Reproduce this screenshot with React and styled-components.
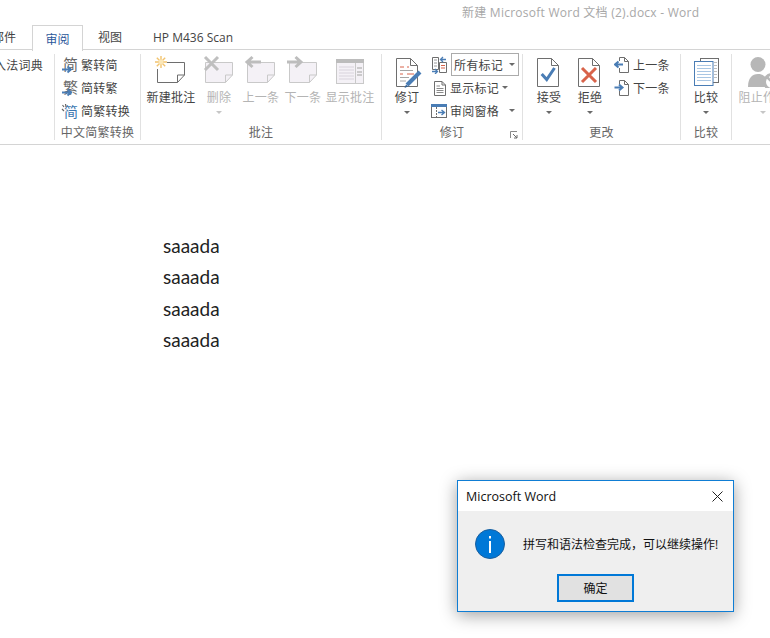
import React from "react";
import styled, { createGlobalStyle } from "styled-components";

const CJK = `"Open Sans", "Noto Sans CJK SC", sans-serif`;

const GlobalStyle = createGlobalStyle`
  html, body {
    margin: 0;
    padding: 0;
    background: #fff;
    overflow: hidden;
  }
`;

const Page = styled.div`
  position: relative;
  width: 770px;
  height: 638px;
  overflow: hidden;
  background: #fff;
  font-family: ${CJK};
  font-size: 12px;
  color: #444;
`;

const TitleBar = styled.div`
  height: 24px;
  display: flex;
  align-items: center;
  padding-left: 462px;
  color: #a8a8a8;
  font-size: 12px;
  letter-spacing: 0.25px;
  white-space: nowrap;
`;

const TabRow = styled.div`
  height: 26px;
  box-sizing: border-box;
  display: flex;
  margin-left: -24px;
  border-bottom: 1px solid #d4d4d4;
`;

const Tab = styled.div`
  box-sizing: border-box;
  height: ${(p) => (p.$active ? "26px" : "25px")};
  margin-top: ${(p) => (p.$active ? "1px" : "0")};
  width: ${(p) => p.$width}px;
  display: flex;
  align-items: center;
  justify-content: center;
  white-space: nowrap;
  color: ${(p) => (p.$active ? "#2b579a" : "#444")};
  background: #fff;
  border: 1px solid ${(p) => (p.$active ? "#d4d4d4" : "transparent")};
  border-bottom: none;
`;

const Ribbon = styled.div`
  height: 95px;
  box-sizing: border-box;
  display: flex;
  align-items: flex-start;
  padding-top: 4px;
  border-bottom: 1px solid #d4d4d4;
`;

const Group = styled.div`
  position: relative;
  flex: none;
  box-sizing: border-box;
  width: ${(p) => p.$width}px;
  height: 86px;
  display: flex;
  flex-direction: column;
  border-right: ${(p) => (p.$last ? "none" : "1px solid #e1e1e1")};
`;

const GroupBody = styled.div`
  height: 73px;
  display: flex;
  align-items: flex-start;
  padding-left: ${(p) => p.$pad || 0}px;
`;

const GroupLabel = styled.div`
  height: 14px;
  line-height: 14px;
  text-align: center;
  color: #666;
  white-space: nowrap;
  letter-spacing: 0.25px;
`;

const Launcher = styled.svg`
  position: absolute;
  right: 4px;
  bottom: 1px;
`;

const BigButton = styled.div`
  flex: none;
  width: ${(p) => p.$width}px;
  display: flex;
  flex-direction: column;
  align-items: center;
  color: ${(p) => (p.$off ? "#b4b4b4" : "#444")};
`;

const IconSlot = styled.div`
  height: 34px;
  display: flex;
  justify-content: center;
`;

const BigLabel = styled.div`
  height: 20px;
  line-height: 20px;
  white-space: nowrap;
  letter-spacing: 0.25px;
`;

const Caret = styled.i`
  display: block;
  width: 0;
  height: 0;
  margin-top: ${(p) => p.$top || 0}px;
  margin-left: ${(p) => p.$left || 0}px;
  border-left: 3px solid transparent;
  border-right: 3px solid transparent;
  border-top: 3px solid ${(p) => (p.$off ? "#c6c6c6" : "#6a6a6a")};
`;

const Stack = styled.div`
  display: flex;
  flex-direction: column;
  margin-top: -1px;
  padding-left: ${(p) => p.$pad || 0}px;
`;

const Row = styled.div`
  height: 23px;
  display: flex;
  align-items: center;
  white-space: nowrap;
  letter-spacing: 0.25px;
`;

const RowText = styled.span`
  margin-left: ${(p) => p.$left || 0}px;
`;

const ComboBox = styled.div`
  box-sizing: border-box;
  width: 68px;
  height: 23px;
  margin-left: 3px;
  padding-left: 2px;
  display: flex;
  align-items: center;
  border: 1px solid #ababab;
`;

const ClippedText = styled.div`
  height: 23px;
  margin-top: -1px;
  padding-right: 11px;
  display: flex;
  align-items: center;
  justify-content: flex-end;
  white-space: nowrap;
  overflow: hidden;
  letter-spacing: 0.25px;
  width: 100%;
  box-sizing: border-box;
`;

const Doc = styled.div`
  padding: 85px 0 0 163px;
  font-family: Lato, "Liberation Sans", sans-serif;
  font-size: 19px;
  color: #222;
`;

const DocLine = styled.div`
  height: 31.3px;
  line-height: 31.3px;
`;

const Dialog = styled.div`
  position: absolute;
  left: 457px;
  top: 480px;
  width: 277px;
  height: 132px;
  box-sizing: border-box;
  display: flex;
  flex-direction: column;
  background: #efefef;
  border: 1px solid #0f7dd4;
  box-shadow: 0 3px 16px rgba(0, 0, 0, 0.38);
`;

const DialogTitle = styled.div`
  height: 30px;
  display: flex;
  align-items: center;
  justify-content: space-between;
  padding: 0 10px 0 8px;
  background: #fff;
  color: #111;
  font-size: 12.5px;
`;

const DialogBody = styled.div`
  display: flex;
  align-items: center;
  gap: 18px;
  padding: 18px 0 0 17px;
  color: #111;
`;

const DialogFooter = styled.div`
  display: flex;
  justify-content: center;
  padding-top: 15px;
`;

const OkButton = styled.div`
  box-sizing: border-box;
  width: 77px;
  height: 28px;
  display: flex;
  align-items: center;
  justify-content: center;
  background: #e1e1e1;
  border: 2px solid #0078d7;
  color: #111;
`;

const line = "#6e6e6e";
const blue = "#4a7db5";
const red = "#d8634a";
const offLine = "#c9c9c9";
const offFill = "#f4f1f6";

function Big({ x = 36, children }) {
  return (
    <svg width={x} height="34" viewBox={`0 0 ${x} 34`} fill="none">
      {children}
    </svg>
  );
}

function Note({ off, open }) {
  return (
    <>
      <path
        d={open ? "M14 8.5H31.5V21L24.5 28.5H4.5V15" : "M4.5 8.5H31.5V21L24.5 28.5H4.5Z"}
        stroke={off ? offLine : line}
        fill={off ? offFill : "#fff"}
      />
      <path d="M31.5 21H24.5V28.5" stroke={off ? offLine : line} />
    </>
  );
}

function NewNoteIcon() {
  return (
    <Big>
      <Note open />
      <g stroke="#f2c46f" strokeWidth="1.4">
        <path d="M8 2V14M2 8H14M3.8 3.8L12.2 12.2M12.2 3.8L3.8 12.2" />
      </g>
      <circle cx="8" cy="8" r="2.4" fill="#fbe7b8" />
    </Big>
  );
}

function DeleteIcon() {
  return (
    <Big>
      <Note off />
      <path d="M4 3L17 16M17 3L4 16" stroke="#bfbfbf" strokeWidth="3" />
    </Big>
  );
}

function PrevNoteIcon() {
  return (
    <Big>
      <Note off />
      <path d="M18 8H5M9.5 3L4 8L9.5 13" stroke="#bdbdbd" strokeWidth="3" />
    </Big>
  );
}

function NextNoteIcon() {
  return (
    <Big>
      <Note off />
      <path d="M2 8H15M10.5 3L16 8L10.5 13" stroke="#bdbdbd" strokeWidth="3" />
    </Big>
  );
}

function ShowNotesIcon() {
  return (
    <Big>
      <rect x="4.5" y="5.5" width="27" height="24" fill={offFill} stroke={offLine} />
      <rect x="4" y="5" width="28" height="4" fill="#bcbcbc" />
      <path d="M7 13H22M7 16H22M7 19H22M7 22H22M7 25H22" stroke="#d8d3dc" />
      <path d="M23.5 9V29" stroke={offLine} />
      <path d="M25 14H30M25 18H30M25 21H30" stroke="#bdbdbd" strokeWidth="1.4" />
    </Big>
  );
}

function PageShape() {
  return (
    <>
      <path d="M6.5 4.5H20.5L27.5 11.5V32.5H6.5Z" fill="#fff" stroke={line} />
      <path d="M20.5 4.5V11.5H27.5" stroke={line} />
    </>
  );
}

function TrackIcon() {
  return (
    <Big>
      <path d="M7.5 4.5H21.5L28.5 11.5V32.5H7.5Z" fill="#fff" stroke={line} />
      <path d="M21.5 4.5V11.5H28.5" stroke={line} />
      <path d="M11 13H15M18 13H20M11 20H14M18 20H25" stroke={red} />
      <path d="M11 16.500H24M11 23.500H20M11 27H17" stroke="#a6a6a6" />
      <path d="M18 31L31 18" stroke={blue} strokeWidth="4" />
      <path d="M15.500 34L17 30.500L19 32.500Z" fill="#2f5f94" />
    </Big>
  );
}

function AcceptIcon() {
  return (
    <Big>
      <PageShape />
      <path d="M10.700 20L15.700 25.500L23.500 14" stroke={blue} strokeWidth="3" />
    </Big>
  );
}

function RejectIcon() {
  return (
    <Big>
      <PageShape />
      <path d="M10 14L24 28M24 14L10 28" stroke={red} strokeWidth="3" />
    </Big>
  );
}

function CompareIcon() {
  return (
    <Big>
      <rect x="12.500" y="4.500" width="18" height="24" fill="#fff" stroke={line} />
      <path d="M26 8.500H29M26 11.500H29M26 14.500H29M26 17.500H29M26 20.500H29M26 23.500H29" stroke="#bdbdbd" />
      <rect x="6.500" y="7.500" width="18.500" height="24" fill="#fff" stroke={blue} />
      <path d="M9 11.500H23M9 14.500H23M9 17.500H23M9 20.500H23M9 23.500H23M9 26.500H23" stroke="#a9c6e3" />
    </Big>
  );
}

function BlockIcon() {
  return (
    <Big>
      <circle cx="13" cy="10.500" r="7.500" fill="#b7b7b7" />
      <path d="M3 33C3 24 7 20 13 20C19 20 23 24 23 33Z" fill="#b7b7b7" />
      <circle cx="27" cy="28" r="7.500" fill="#fff" stroke="#b7b7b7" strokeWidth="3" />
      <path d="M22 23L32 33" stroke="#b7b7b7" strokeWidth="2.500" />
    </Big>
  );
}

function Small({ children, width = 17 }) {
  return (
    <svg width={width} height="18" viewBox={`0 0 ${width} 18`} fill="none">
      {children}
    </svg>
  );
}

function ConvertIcon({ glyph }) {
  return (
    <Small>
      <text x="2" y="14" fontSize="15" fill="#666" fontFamily="Noto Sans CJK SC">
        {glyph}
      </text>
      <path d="M1 13.500H9M6.500 10.500L10 13.500L6.500 16.500" stroke={blue} strokeWidth="1.800" />
    </Small>
  );
}

function SwapIcon() {
  return (
    <Small>
      <text x="3" y="15" fontSize="14" fill="#3b76b0" fontFamily="Noto Sans CJK SC">
        简
      </text>
      <path d="M1.500 3L3 5M4.500 2L5 5M1 7L3 9" stroke="#666" strokeWidth="1.200" />
    </Small>
  );
}

function AllMarkupIcon() {
  return (
    <Small>
      <path d="M1.500 1.500H7.500V13.500H1.500Z" stroke={line} fill="#fff" />
      <path d="M3 4H6M3 7H6M3 10H6" stroke="#9a9a9a" />
      <path d="M8.500 6.500H15.500V16.500H8.500Z" stroke={line} fill="#fff" />
      <path d="M10 9.500H14M10 12H14" stroke={red} />
      <path d="M15 3.500H10M12 1L9.500 3.500L12 6" stroke={blue} strokeWidth="1.300" />
      <path d="M1 15.500H6M4 13L6.500 15.500L4 18" stroke={blue} strokeWidth="1.300" />
    </Small>
  );
}

function ShowMarkupIcon() {
  return (
    <Small>
      <path d="M3.500 2.500H11L14.500 6V16.500H3.500Z" fill="#fff" stroke={line} />
      <path d="M11 2.500V6H14.500" stroke={line} />
      <path d="M5.500 7H9M5.500 9.500H12.500M5.500 11.500H12.500M5.500 13.500H12.500" stroke="#8a8a8a" />
    </Small>
  );
}

function PaneIcon() {
  return (
    <Small>
      <rect x="0.500" y="2.500" width="15" height="13" fill="#fff" stroke={line} />
      <rect y="2" width="16" height="3" fill={blue} />
      <path d="M5.500 5V16" stroke={line} strokeDasharray="2 1" />
      <path d="M7 10.500H13M10.500 8L13.500 10.500L10.500 13" stroke={blue} strokeWidth="1.400" />
    </Small>
  );
}

function ChangeIcon({ next }) {
  return (
    <Small>
      <path d="M5.500 1.500H10.500L14.500 5.500V16.500H5.500" stroke={line} fill="#fff" />
      <path d="M5.500 1.500V5M5.500 12V16.500M10.500 1.500V5.500H14.500" stroke={line} />
      <path
        d={next ? "M0.500 8.500H7M5 5.500L8.500 8.500L5 11.500" : "M9 8.500H2.500M4.500 5.500L1 8.500L4.500 11.500"}
        stroke={blue}
        strokeWidth="2"
      />
    </Small>
  );
}

function InfoIcon() {
  return (
    <svg width="30" height="30" viewBox="0 0 30 30" fill="none">
      <circle cx="15" cy="15" r="14.500" fill="#0078d7" stroke="#1a5f9e" />
      <rect x="14" y="12" width="2" height="12" fill="#fff" />
      <rect x="14" y="7" width="2" height="2.500" fill="#fff" />
    </svg>
  );
}

export default function App() {
  return (
    <Page>
      <GlobalStyle />
      <TitleBar>新建 Microsoft Word 文档 (2).docx - Word</TitleBar>
      <TabRow>
        <Tab $width={56}>邮件</Tab>
        <Tab $width={51} $active>审阅</Tab>
        <Tab $width={54}>视图</Tab>
        <Tab $width={112}>HP M436 Scan</Tab>
      </TabRow>
      <Ribbon>
        <Group $width={55}>
          <ClippedText>输入法词典</ClippedText>
        </Group>
        <Group $width={86}>
          <GroupBody $pad={6}>
            <Stack>
              <Row><ConvertIcon glyph="简" /><RowText $left={3}>繁转简</RowText></Row>
              <Row><ConvertIcon glyph="繁" /><RowText $left={3}>简转繁</RowText></Row>
              <Row><SwapIcon /><RowText $left={3}>简繁转换</RowText></Row>
            </Stack>
          </GroupBody>
          <GroupLabel>中文简繁转换</GroupLabel>
        </Group>
        <Group $width={241}>
          <GroupBody $pad={5}>
            <BigButton $width={50}>
              <IconSlot><NewNoteIcon /></IconSlot>
              <BigLabel>新建批注</BigLabel>
            </BigButton>
            <BigButton $width={46} $off>
              <IconSlot><DeleteIcon /></IconSlot>
              <BigLabel>删除</BigLabel>
              <Caret $top={3} $off />
            </BigButton>
            <BigButton $width={38} $off>
              <IconSlot><PrevNoteIcon /></IconSlot>
              <BigLabel>上一条</BigLabel>
            </BigButton>
            <BigButton $width={46} $off>
              <IconSlot><NextNoteIcon /></IconSlot>
              <BigLabel>下一条</BigLabel>
            </BigButton>
            <BigButton $width={48} $off>
              <IconSlot><ShowNotesIcon /></IconSlot>
              <BigLabel>显示批注</BigLabel>
            </BigButton>
          </GroupBody>
          <GroupLabel>批注</GroupLabel>
        </Group>
        <Group $width={141}>
          <GroupBody $pad={5}>
            <BigButton $width={40}>
              <IconSlot><TrackIcon /></IconSlot>
              <BigLabel>修订</BigLabel>
              <Caret $top={3} />
            </BigButton>
            <Stack $pad={4}>
              <Row>
                <AllMarkupIcon />
                <ComboBox>所有标记<Caret $left={6} /></ComboBox>
              </Row>
              <Row>
                <ShowMarkupIcon />
                <RowText $left={2}>显示标记</RowText>
                <Caret $left={3} />
              </Row>
              <Row>
                <PaneIcon />
                <RowText $left={2}>审阅窗格</RowText>
                <Caret $left={10} />
              </Row>
            </Stack>
          </GroupBody>
          <GroupLabel>修订</GroupLabel>
          <Launcher width="8" height="8" viewBox="0 0 8 8" fill="none">
            <path d="M0.500 7V0.500H7" stroke="#8a8a8a" />
            <path d="M3 3L7 7M7 4V7H4" stroke="#6a6a6a" />
          </Launcher>
        </Group>
        <Group $width={158}>
          <GroupBody $pad={6}>
            <BigButton $width={40}>
              <IconSlot><AcceptIcon /></IconSlot>
              <BigLabel>接受</BigLabel>
              <Caret $top={3} />
            </BigButton>
            <BigButton $width={42}>
              <IconSlot><RejectIcon /></IconSlot>
              <BigLabel>拒绝</BigLabel>
              <Caret $top={3} />
            </BigButton>
            <Stack $pad={3}>
              <Row><ChangeIcon /><RowText $left={2}>上一条</RowText></Row>
              <Row><ChangeIcon next /><RowText $left={2}>下一条</RowText></Row>
            </Stack>
          </GroupBody>
          <GroupLabel>更改</GroupLabel>
        </Group>
        <Group $width={51}>
          <GroupBody>
            <BigButton $width={50}>
              <IconSlot><CompareIcon /></IconSlot>
              <BigLabel>比较</BigLabel>
              <Caret $top={3} />
            </BigButton>
          </GroupBody>
          <GroupLabel>比较</GroupLabel>
        </Group>
        <Group $width={60} $last>
          <GroupBody $pad={6}>
            <BigButton $width={50} $off>
              <IconSlot><BlockIcon /></IconSlot>
              <BigLabel>阻止作者</BigLabel>
              <Caret $top={3} $off />
            </BigButton>
          </GroupBody>
        </Group>
      </Ribbon>
      <Doc>
        <DocLine>saaada</DocLine>
        <DocLine>saaada</DocLine>
        <DocLine>saaada</DocLine>
        <DocLine>saaada</DocLine>
      </Doc>
      <Dialog>
        <DialogTitle>
          Microsoft Word
          <svg width="11" height="11" viewBox="0 0 11 11" fill="none">
            <path d="M0.500 0.500L10.500 10.500M10.500 0.500L0.500 10.500" stroke="#222" />
          </svg>
        </DialogTitle>
        <DialogBody>
          <InfoIcon />
          <span>拼写和语法检查完成，可以继续操作!</span>
        </DialogBody>
        <DialogFooter>
          <OkButton>确定</OkButton>
        </DialogFooter>
      </Dialog>
    </Page>
  );
}
